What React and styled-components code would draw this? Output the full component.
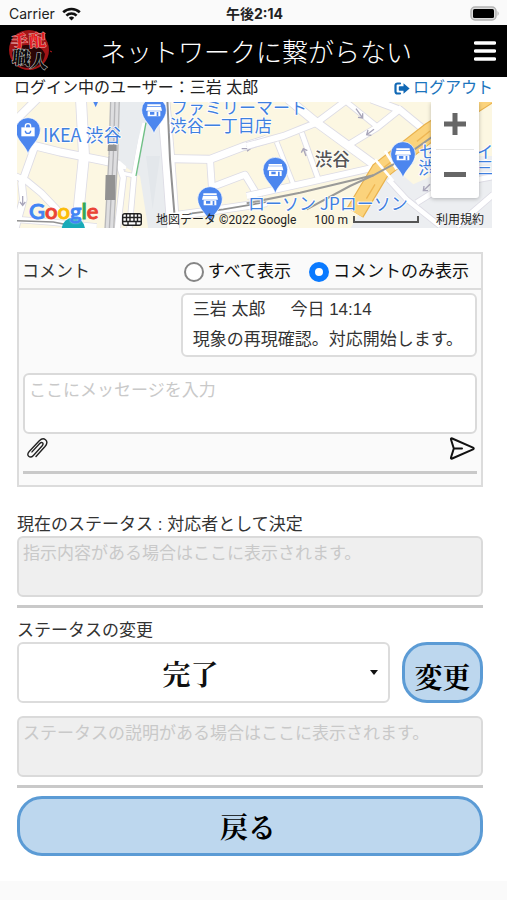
import React from "react";
import styled, { createGlobalStyle } from "styled-components";

const sans = `"Liberation Sans", "Noto Sans CJK JP", sans-serif`;
const serif = `"Noto Serif CJK JP", "Liberation Serif", "Noto Sans CJK JP", serif`;

const GlobalStyle = createGlobalStyle`
  *, *::before, *::after { box-sizing: border-box; }
  body { margin: 0; background: #fff; color: #333; font: 17px/24px ${sans}; }
  button, textarea, select, input { font: inherit; color: inherit; margin: 0; }
`;

const Page = styled.div`
  min-height: 100vh;
  display: flex;
  flex-direction: column;
`;

const StatusBar = styled.div`
  display: grid;
  grid-template-columns: 1fr auto 1fr;
  align-items: center;
  height: 25px;
  padding: 2px 7px 0 9px;
  background: #fafafa;
  color: #222;
  font: 14px/20px Inter, "Noto Sans CJK JP", sans-serif;
`;

const Carrier = styled.span`
  display: flex;
  align-items: center;
  gap: 7px;
`;

const Clock = styled.span`
  font-weight: 700;
`;

const Battery = styled.svg`
  justify-self: end;
`;

const Header = styled.header`
  display: flex;
  align-items: center;
  gap: 46px;
  height: 52px;
  padding: 0 11px 0 6px;
  background: #000;
  color: #fff;
`;

const Title = styled.h1`
  flex: 1;
  margin: 0;
  font: 300 26px/40px "Noto Sans CJK JP", sans-serif;
  white-space: nowrap;
`;

const IconButton = styled.button`
  display: flex;
  padding: 0;
  border: 0;
  background: none;
  cursor: pointer;
`;

const UserLine = styled.div`
  display: flex;
  justify-content: space-between;
  height: 25px;
  padding: 0 14px;
  color: #222;
  font-size: 16px;
  line-height: 22px;
`;

const Logout = styled.a`
  display: flex;
  align-items: center;
  align-self: flex-start;
  gap: 3px;
  color: #1c75bd;
  text-decoration: none;
`;

const MapFrame = styled.section`
  position: relative;
  height: 126px;
  margin: 0 15px 0 17px;
  overflow: hidden;
`;

const MapDrawing = styled.svg`
  display: block;
  width: 100%;
  height: 100%;
`;

const ZoomControl = styled.div`
  position: absolute;
  top: 0;
  right: 13px;
  width: 48px;
  display: flex;
  flex-direction: column;
  align-items: center;
  background: #fff;
  border-radius: 0 0 3px 3px;
  box-shadow: 0 1px 4px rgba(0, 0, 0, 0.25);
`;

const ZoomButton = styled.button`
  display: flex;
  align-items: center;
  justify-content: center;
  width: 38px;
  height: ${(p) => (p.$last ? "49px" : "47px")};
  padding: ${(p) => (p.$last ? "0" : "0 0 4px")};
  border: 0;
  border-top: ${(p) => (p.$last ? "1px solid #e6e6e6" : "0")};
  background: none;
  cursor: pointer;
`;

const GoogleMark = styled.a`
  position: absolute;
  left: 12px;
  bottom: 6px;
  font: 500 22px/22px Lato, sans-serif;
  text-decoration: none;
  text-shadow: 0 0 2px #fff;
`;

const Letter = styled.span`
  color: ${(p) => p.$color};
  -webkit-text-stroke: 1px ${(p) => p.$color};
`;

const MapFooter = styled.div`
  position: absolute;
  left: 105px;
  right: 8px;
  bottom: 0;
  display: flex;
  align-items: center;
  gap: 14px;
  height: 17px;
  color: #222;
  font: 12px/16px Roboto, "Noto Sans CJK JP", sans-serif;
  white-space: nowrap;
`;

const Scale = styled.span`
  display: flex;
  align-items: center;
  gap: 5px;
  padding-left: 4px;
`;

const ScaleBar = styled.span`
  width: 66px;
  height: 7px;
  border: 2px solid #555;
  border-top: 0;
`;

const Terms = styled.a`
  margin-left: auto;
  color: inherit;
  text-decoration: none;
`;

const Content = styled.main`
  flex: 1;
  display: flex;
  flex-direction: column;
  padding: 24px 24px 24px 17px;
`;

const Panel = styled.section`
  display: flex;
  flex-direction: column;
  border: 2px solid #dcdcdc;
  background: #fafafa;
  margin-bottom: 27px;
`;

const PanelHeader = styled.div`
  display: flex;
  align-items: center;
  gap: 18px;
  height: 36px;
  padding: 1px 12px 0 3px;
  border-bottom: 2px solid #dcdcdc;
`;

const PanelTitle = styled.h2`
  margin: 0 auto 0 0;
  font-size: 17px;
  line-height: 24px;
  font-weight: 400;
`;

const RadioLabel = styled.label`
  display: flex;
  align-items: center;
  gap: 4px;
  color: #111;
`;

const Radio = styled.input`
  appearance: none;
  width: 20px;
  height: 20px;
  border: 2px solid #858585;
  border-radius: 50%;
  background: #fff;
  &:checked { border: 6px solid #0a7aff; }
`;

const PanelBody = styled.div`
  display: flex;
  flex-direction: column;
  padding: 3px 4px 11px;
`;

const Message = styled.article`
  align-self: flex-end;
  padding: 0 12px 0 10px;
  margin-bottom: 16px;
  border: 2px solid #dcdcdc;
  border-radius: 6px;
  background: #fff;
  line-height: 30px;
`;

const MessageMeta = styled.div`
  display: flex;
  gap: 25px;
`;

const TextBox = styled.textarea`
  display: block;
  width: 100%;
  height: 61px;
  padding: 4px;
  border: 2px solid #dadada;
  border-radius: 6px;
  background: ${(p) => (p.disabled ? "#efefef" : "#fff")};
  resize: none;
  &::placeholder { color: #c9c9c9; opacity: 1; }
`;

const Tools = styled.div`
  display: flex;
  align-items: center;
  justify-content: space-between;
  height: 28px;
  padding: 0 2px 0 3px;
  margin-bottom: 9px;
`;

const Rule = styled.hr`
  width: 100%;
  height: 3px;
  margin: ${(p) => (p.$spaced ? "8px 0" : "0")};
  border: 0;
  background: #c9c9c9;
`;

const FieldLabel = styled.label`
  padding-top: ${(p) => (p.$low ? "4px" : "0")};
  line-height: 22px;
`;

const ChangeRow = styled.div`
  display: flex;
  gap: 12px;
  margin-bottom: 13px;
`;

const SelectWrap = styled.div`
  position: relative;
  flex: 1;
  display: flex;
`;

const StatusSelect = styled.select`
  appearance: none;
  width: 100%;
  height: 61px;
  padding: 0 26px 0 0;
  border: 2px solid #dcdcdc;
  border-radius: 6px;
  background: #fff;
  color: #111;
  font: 700 28px/40px ${serif};
  text-align: center;
  text-align-last: center;
`;

const Caret = styled.svg`
  position: absolute;
  right: 12px;
  top: 28px;
  pointer-events: none;
`;

const PillButton = styled.button`
  width: ${(p) => (p.$wide ? "100%" : "81px")};
  height: ${(p) => (p.$wide ? "60px" : "61px")};
  padding: ${(p) => (p.$wide ? "0 4px 0 0" : "6px 0 0")};
  border: 3px solid #5b9bd5;
  border-radius: 25px;
  background: #bdd7ee;
  color: #000;
  font: 700 28px/40px ${serif};
  white-space: nowrap;
  cursor: pointer;
`;

const BottomBar = styled.footer`
  height: 19px;
  background: #fafafa;
`;

function Wifi() {
  return (
    <svg width="19" height="14" viewBox="0 0 19 14" aria-hidden="true">
      <g fill="none" stroke="#111" strokeWidth="2.6">
        <path d="M1.2 5.3a12 12 0 0 1 16.6 0" />
        <path d="M4.4 8.6a7.3 7.3 0 0 1 10.2 0" />
      </g>
      <path d="M9.5 13.6 6.8 10.8a3.9 3.9 0 0 1 5.4 0z" fill="#111" />
    </svg>
  );
}

function Logo() {
  return (
    <svg width="48" height="46" viewBox="0 0 48 46" role="img" aria-label="手配職人">
      <circle cx="23" cy="22" r="20" fill="#a01416" />
      <path d="M6 25c3-6 8-8 16-8s15 3 17 9c-1 9-8 15-17 14-9 0-15-6-16-15z" fill="#2a0506" />
      <g fontFamily="Noto Serif CJK JP, Noto Sans CJK JP, serif" fontWeight="900" paintOrder="stroke" strokeLinejoin="round">
        <g transform="rotate(-3 22 14)" fontSize="17" fill="#e51b20" stroke="#d8a8a8" strokeWidth="1">
          <text x="5" y="19">手</text>
          <text x="23" y="19">配</text>
        </g>
        <g transform="rotate(5 24 32)" fontSize="18" fill="#0a0a0a" stroke="#b4b4b4" strokeWidth="1.2">
          <text x="6" y="37">職</text>
          <text x="24" y="39">人</text>
        </g>
      </g>
      <path d="M44 23l2 1" stroke="#c21a1d" fill="none" />
    </svg>
  );
}

function Pin({ x, y, bag }) {
  return (
    <g transform={`translate(${x} ${y})`}>
      <path d="M0 72C-5 48-37 30-37 0a37 37 0 0 1 74 0C37 30 5 48 0 72z" fill="#4c86ee" stroke="#fff" strokeWidth="2" />
      {bag ? (
        <g>
          <path d="M-20-8h40v27h-40z" fill="#fff" />
          <path d="M-8-7v-4a8 8 0 0 1 16 0v4" fill="none" stroke="#fff" strokeWidth="4" />
          <path d="M-8 2a8 8 0 0 0 16 0" fill="none" stroke="#4c86ee" strokeWidth="4" />
        </g>
      ) : (
        <g>
          <path d="M-20-17h40v5h-40zM-21-10h42l3 12h-48zM-19 4h38v15h-38z" fill="#fff" />
          <path d="M-12 6h13v8h-13zM8 6h5v13h-5z" fill="#4c86ee" />
        </g>
      )}
    </g>
  );
}

const westRoads = [
  ["M15 75 85 5", 22],
  ["M213 10 222 180 200 400", 30],
  ["M70 148 150 168 280 194 350 210", 22],
  ["M75 150 35 262 40 310 15 400", 20],
  ["M15 240 50 255 95 292 150 350", 18],
  ["M325 200 340 245 322 400", 16],
  ["M330 230 375 240", 10],
  ["M400 80 372 240 358 400", 14],
  ["M460 10 475 190 490 400", 36],
  ["M490 188 600 190 700 152 770 130", 22],
  ["M600 190 606 280", 18],
  ["M610 272 705 236 750 310", 18],
  ["M490 360 600 345 770 320", 22],
  ["M15 370 120 378 260 392", 16],
];

const eastRoads = [
  ["M115 10 200 80 385 215", 24],
  ["M-10 150 100 120 200 80 300 5", 18],
  ["M280 10 385 95", 14],
  ["M365 10 450 42 545 120", 20],
  ["M455 35 380 95 290 150", 18],
  ["M80 138 130 265", 12],
  ["M155 110 205 250", 14],
  ["M-10 300 180 258 370 215", 18],
  ["M415 250 470 310 570 390", 14],
  ["M500 320 580 270 740 240", 16],
  ["M620 390 730 295", 16],
];

function Roads({ items }) {
  return (
    <g fill="none" strokeLinejoin="round">
      {items.map(([d, w]) => (
        <path key={d} d={d} stroke="#dddce5" strokeWidth={w + 5} />
      ))}
      {items.map(([d, w]) => (
        <path key={d} d={d} stroke="#fff" strokeWidth={w} />
      ))}
    </g>
  );
}

function StreetMap() {
  return (
    <MapDrawing viewBox="0 0 1425 378" preserveAspectRatio="xMidYMid slice" role="img" aria-label="渋谷の地図">
      <rect width="1425" height="378" fill="#fcf7e2" />
      <g transform="translate(-21 -18)">
        <path d="M325 10H455L485 400H415L390 240 325 200z" fill="#e9ecef" />
        <Roads items={westRoads} />
        <path d="M330 60 400 70 385 130 365 225 330 195z" fill="#e9ecef" />
        <path d="M408 180 428 340 450 180z" fill="#e3e7eb" />
        <g fill="none">
          <path d="M315 10 310 180 298 400" stroke="#b8b8ba" strokeWidth="30" />
          <path d="M315 10 310 180 298 400" stroke="#dedee0" strokeWidth="22" />
          <path d="M315 10 310 180 298 400" stroke="#b5b5b8" strokeWidth="4" />
          <path d="M472 10 480 190 493 350" stroke="#929292" strokeWidth="6" />
          <path d="M408 80 378 240" stroke="#6fc185" strokeWidth="4" />
          <path d="M15 374 130 378 210 394M545 352 640 340 770 318" stroke="#929292" strokeWidth="5" />
          <path d="M38 300v28m-8-10 8 10 8-10M695 158h26m-10-8 10 8-10 8" stroke="#a9a6ba" strokeWidth="4" />
        </g>
        <path d="M287 237h29v75h-31zM294 146h26v19h-27z" fill="#929292" />
        <path d="M155 400a35 35 0 0 1 70 0z" fill="#18aab8" />
        <path d="M250 18h14l-7 16z" fill="#4c86ee" />
      </g>
      <g transform="translate(699 -18)">
        <path d="M390 240 540 180H740V400H300z" fill="#eceef1" />
        <path d="M450 230 510 190 545 240 490 265z" fill="#fcf7e2" />
        <Roads items={eastRoads} />
        <g fill="none">
          <path d="M740 -20 540 108 390 225 315 350" stroke="#e9b24d" strokeWidth="58" />
          <path d="M740 -20 540 108 390 225 315 350" stroke="#fbd37c" strokeWidth="51" />
          <path d="M540 105 395 220M375 265 345 315" stroke="#efb754" strokeWidth="4" strokeDasharray="50 20" />
          <path d="M375 190 430 255M405 165 440 220" stroke="#fff" strokeWidth="8" />
          <path d="M-10 322 150 290 370 238 430 205 550 120" stroke="#9a9a98" strokeWidth="6" />
          <path d="M170 340 300 270 370 238" stroke="#9a9a98" strokeWidth="6" />
          <path d="M318 38 338 66m-14-2 14 2 0-14M372 100 350 116m4-14-4 14 14 2M168 180 160 158m-6 12 6-12 12 6M540 265 520 284m2-14-2 14 14 0" stroke="#a9a6ba" strokeWidth="4" />
        </g>
      </g>
      <g fontFamily="Noto Sans CJK JP, sans-serif" fill="#3f80df" fontSize="51" stroke="#fff" strokeWidth="5" paintOrder="stroke" strokeLinejoin="round">
        <text x="78" y="119" fontSize="54">IKEA 渋谷</text>
        <text x="462" y="36">ファミリーマート</text>
        <text x="458" y="90">渋谷一丁目店</text>
        <text x="693" y="325">ローソン JPローソン</text>
        <text x="1206" y="167">セ</text>
        <text x="1204" y="217">渋</text>
        <text x="1378" y="167">イ</text>
        <text x="1378" y="217">三</text>
        <text x="893" y="192" fontSize="53" fontWeight="500" fill="#555">渋谷</text>
      </g>
      <Pin x={33} y={84} bag />
      <Pin x={411} y={24} />
      <Pin x={579} y={291} />
      <Pin x={775} y={203} />
      <Pin x={1158} y={156} />
    </MapDrawing>
  );
}

const googleLetters = [
  ["G", "#4285f4"],
  ["o", "#ea4335"],
  ["o", "#fbbc05"],
  ["g", "#4285f4"],
  ["l", "#34a853"],
  ["e", "#ea4335"],
];

export default function App() {
  return (
    <Page>
      <GlobalStyle />
      <StatusBar>
        <Carrier>
          Carrier
          <Wifi />
        </Carrier>
        <Clock>午後2:14</Clock>
        <Battery width="31" height="15" viewBox="0 0 31 15" aria-hidden="true">
          <rect x="2" y="1" width="25" height="13" rx="4" fill="#ddd" stroke="#b4b4b4" strokeWidth="1.5" />
          <rect x="4" y="3" width="21" height="9" rx="1.5" fill="#000" />
          <path d="M28.5 5q2.5 2.5 0 5z" fill="#b4b4b4" />
        </Battery>
      </StatusBar>

      <Header>
        <Logo />
        <Title>ネットワークに繋がらない</Title>
        <IconButton type="button" aria-label="メニュー">
          <svg width="22" height="20" viewBox="0 0 22 20">
            <path d="M1.5 2h19M1.5 10h19M1.5 18h19" stroke="#fff" strokeWidth="3.4" strokeLinecap="round" />
          </svg>
        </IconButton>
      </Header>

      <UserLine>
        <span>ログイン中のユーザー：三岩 太郎</span>
        <Logout href="#logout">
          <svg width="16" height="13" viewBox="0 0 16 13" aria-hidden="true">
            <path d="M6 1.5H3.5a2 2 0 0 0-2 2v6a2 2 0 0 0 2 2H6" fill="none" stroke="#1068b5" strokeWidth="2.2" strokeLinecap="round" />
            <path d="M9.5 1.3 15.6 6.5 9.5 11.7V8.7H5.5q-.7 0-.7-.7V5q0-.7.7-.7h4z" fill="#1068b5" />
          </svg>
          ログアウト
        </Logout>
      </UserLine>

      <MapFrame>
        <StreetMap />
        <GoogleMark href="#google" aria-label="Google">
          {googleLetters.map(([letter, color], i) => (
            <Letter key={i} $color={color}>{letter}</Letter>
          ))}
        </GoogleMark>
        <MapFooter>
          <svg width="20" height="13" viewBox="0 0 20 13" aria-hidden="true">
            <rect x="0.7" y="0.7" width="18.6" height="11.6" rx="2" fill="#fff" stroke="#222" strokeWidth="1.4" />
            <path d="M1 4.5h18M1 8.500h18M4.500 1v8M8 1v7M12 1v7M15.500 1v8M6 8.500v3.500M14 8.500v3.500" stroke="#222" strokeWidth="1.400" />
          </svg>
          <span>地図データ ©2022 Google</span>
          <Scale>
            100 m
            <ScaleBar />
          </Scale>
          <Terms href="#terms">利用規約</Terms>
        </MapFooter>
        <ZoomControl>
          <ZoomButton type="button" aria-label="拡大">
            <svg width="22" height="22" viewBox="0 0 22 22">
              <path d="M0 11h22M11 0v22" stroke="#666" strokeWidth="5" />
            </svg>
          </ZoomButton>
          <ZoomButton type="button" aria-label="縮小" $last>
            <svg width="22" height="5" viewBox="0 0 22 5">
              <path d="M0 2.5h22" stroke="#666" strokeWidth="5" />
            </svg>
          </ZoomButton>
        </ZoomControl>
      </MapFrame>

      <Content>
        <Panel>
          <PanelHeader>
            <PanelTitle>コメント</PanelTitle>
            <RadioLabel>
              <Radio type="radio" name="filter" value="all" />
              すべて表示
            </RadioLabel>
            <RadioLabel>
              <Radio type="radio" name="filter" value="comments" defaultChecked />
              コメントのみ表示
            </RadioLabel>
          </PanelHeader>
          <PanelBody>
            <Message>
              <MessageMeta>
                <span>三岩 太郎</span>
                <time>今日 14:14</time>
              </MessageMeta>
              <div>現象の再現確認。対応開始します。</div>
            </Message>
            <TextBox aria-label="メッセージ" placeholder="ここにメッセージを入力" />
            <Tools>
              <IconButton type="button" aria-label="ファイルを添付">
                <svg width="22" height="22" viewBox="0 0 22 22" fill="none" stroke="#222" strokeWidth="1.4" strokeLinecap="round">
                  <path d="M10 19.5 19 9.5c2.5-3 2-5.500.5-6.800-1.700-1.400-4-1.200-6.200 1L3.200 14.400c-1.900 2.100-1.600 4-.5 4.900 1.200 1 3 .9 4.700-.9l8.800-9.700c1.200-1.400.8-2.400.3-2.900-.7-.6-1.800-.4-2.800.7l-7.700 8.400" />
                </svg>
              </IconButton>
              <IconButton type="button" aria-label="送信">
                <svg width="26" height="23" viewBox="0 0 26 23" fill="none" stroke="#111" strokeWidth="2" strokeLinejoin="round" strokeLinecap="round">
                  <path d="M2 2.5Q1.6.9 3.2 1.5L24 10.7q1.5.8 0 1.6L3.2 21.5q-1.600.6-1.200-1L4.800 11.500zM5 11.500h8" />
                </svg>
              </IconButton>
            </Tools>
            <Rule />
          </PanelBody>
        </Panel>

        <FieldLabel htmlFor="instruction">現在のステータス : 対応者として決定</FieldLabel>
        <TextBox id="instruction" disabled placeholder="指示内容がある場合はここに表示されます。" />
        <Rule $spaced />

        <FieldLabel htmlFor="status" $low>ステータスの変更</FieldLabel>
        <ChangeRow>
          <SelectWrap>
            <StatusSelect id="status" defaultValue="done">
              <option value="done">完了</option>
            </StatusSelect>
            <Caret width="8" height="5" viewBox="0 0 8 5" aria-hidden="true">
              <path d="M0 0h8L4 5z" fill="#111" />
            </Caret>
          </SelectWrap>
          <PillButton type="button">変更</PillButton>
        </ChangeRow>
        <TextBox aria-label="ステータスの説明" disabled placeholder="ステータスの説明がある場合はここに表示されます。" />
        <Rule $spaced />
        <PillButton type="button" $wide>戻る</PillButton>
      </Content>
      <BottomBar />
    </Page>
  );
}
